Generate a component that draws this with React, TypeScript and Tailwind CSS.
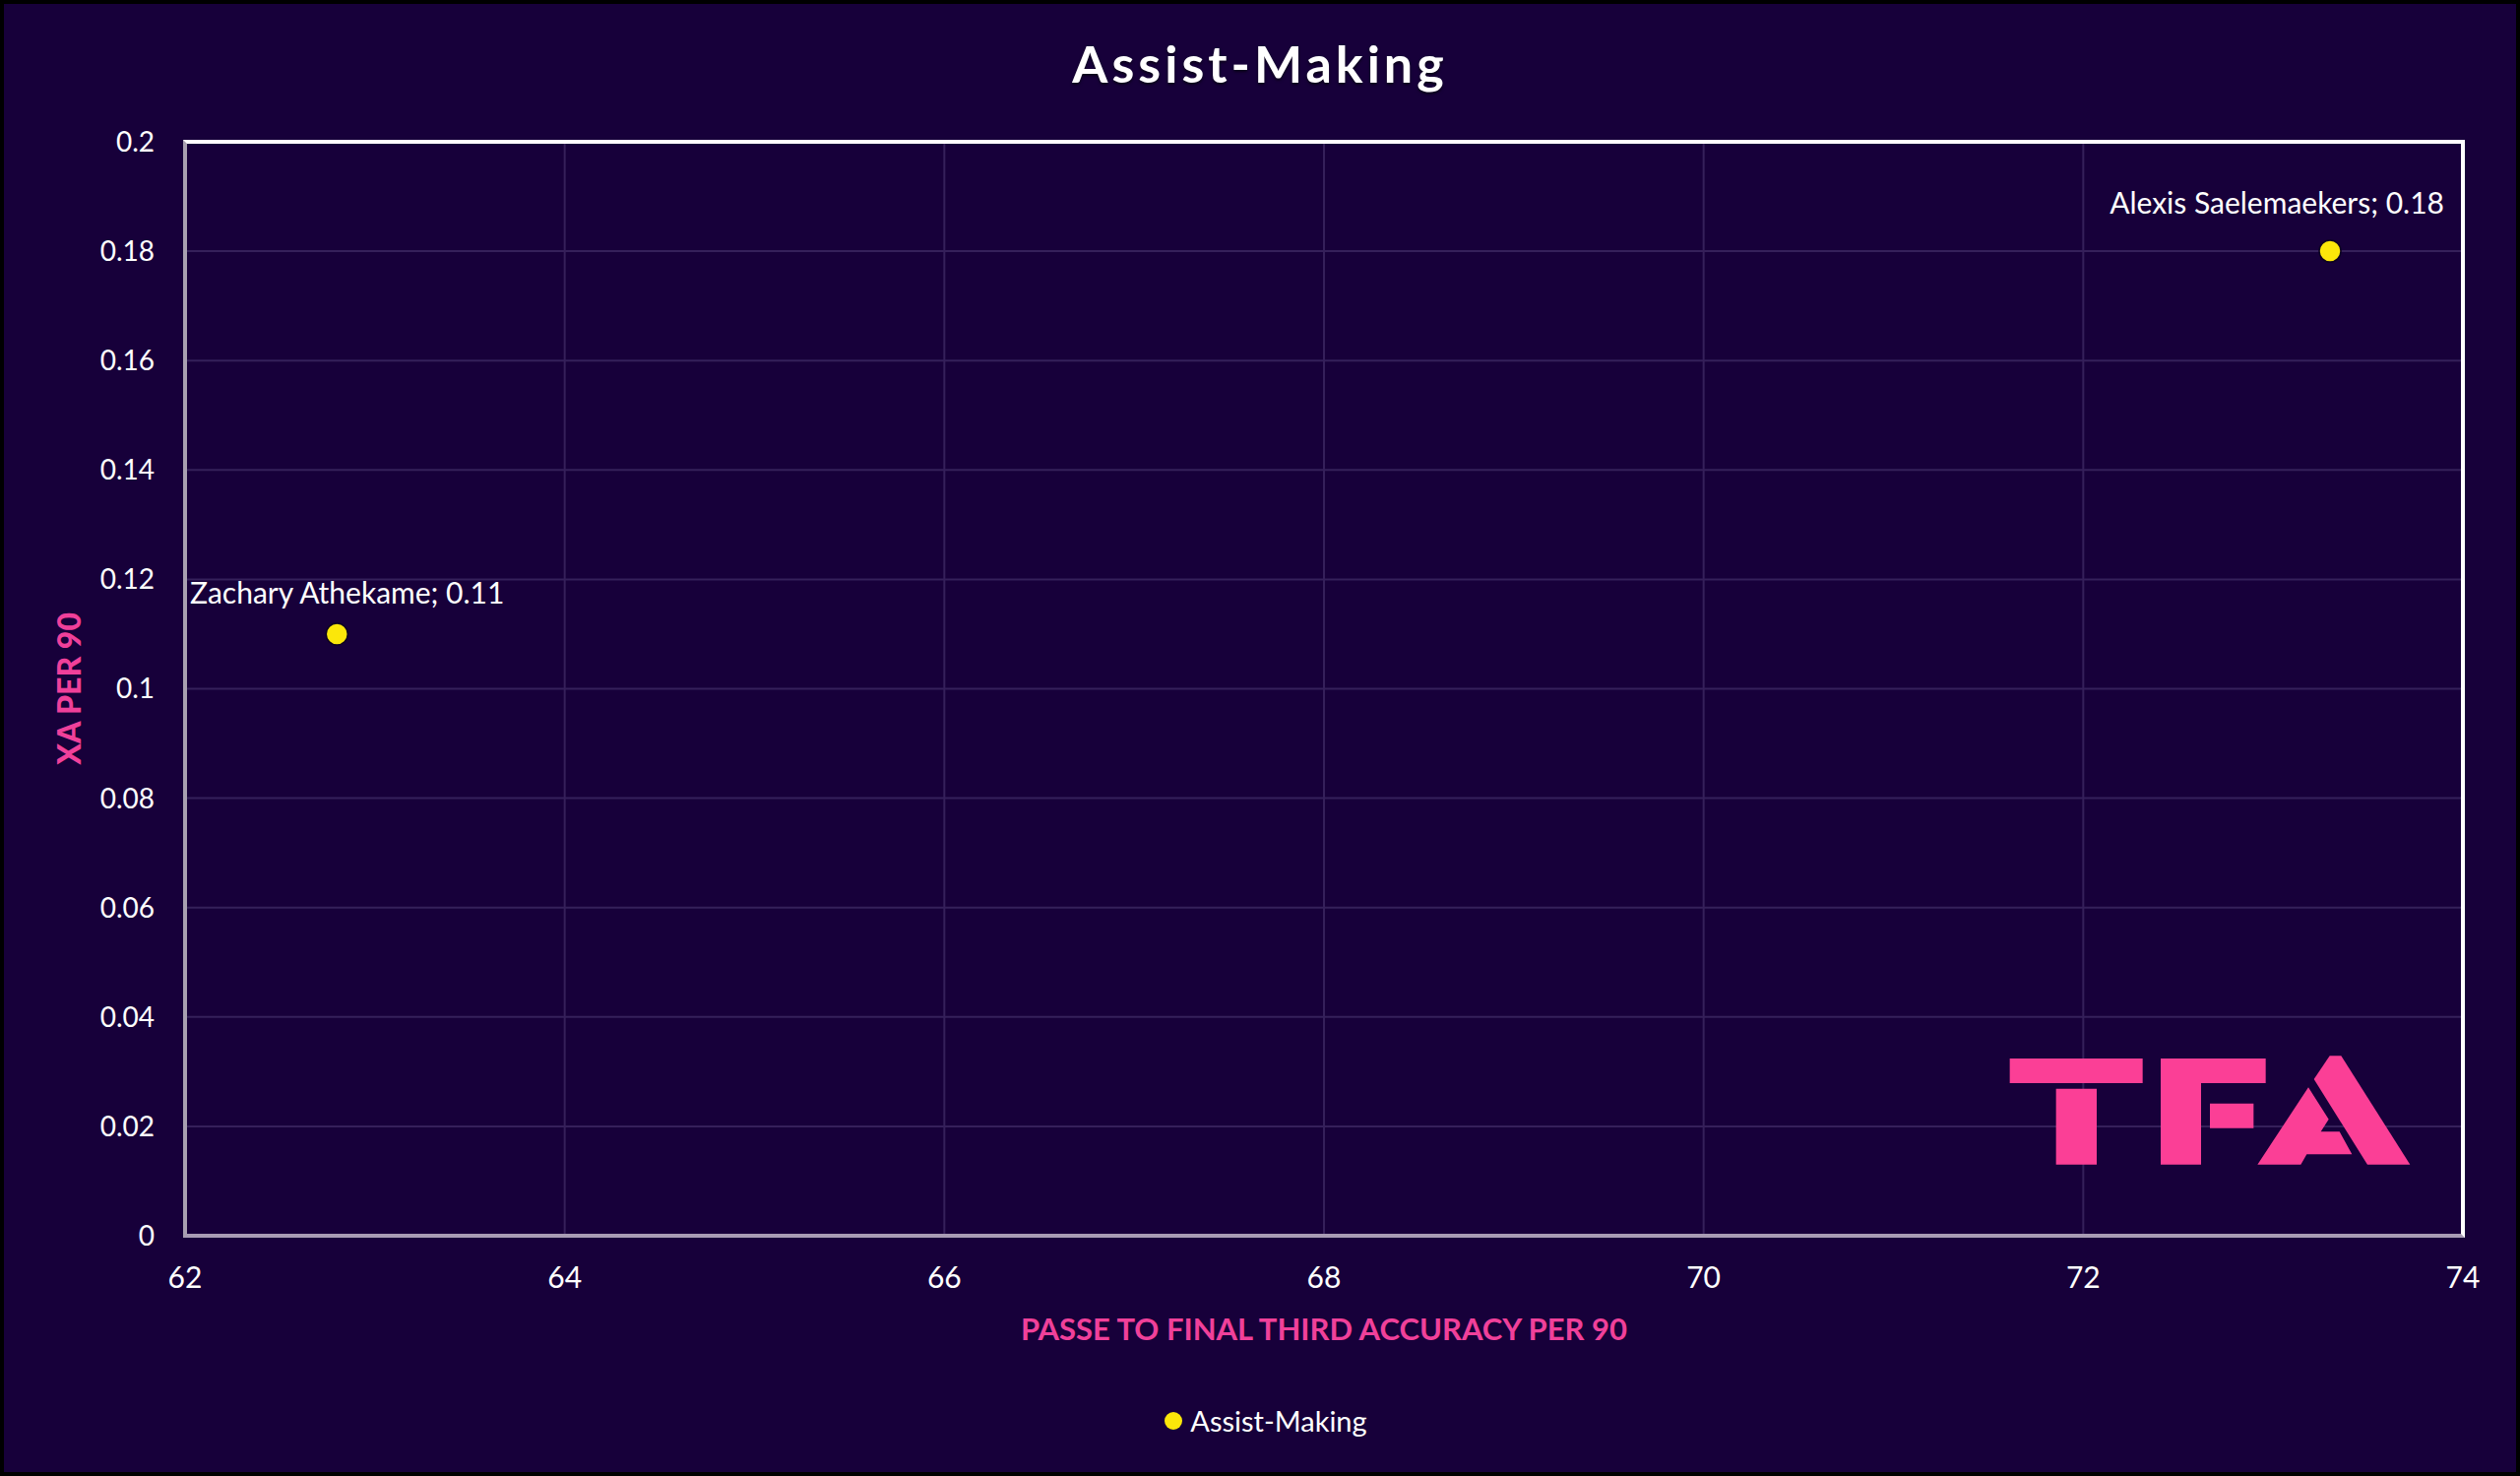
const yTicks = ['0.2', '0.18', '0.16', '0.14', '0.12', '0.1', '0.08', '0.06', '0.04', '0.02', '0'];
const xTicks = ['62', '64', '66', '68', '70', '72', '74'];

const points = [
  { x: 62.8, y: 0.11 },
  { x: 73.3, y: 0.18 },
];

// plot scale, in px inside the inner box of the frame
const sx = (v: number) => ((v - 62) / 12) * 2314 - 2;
const sy = (v: number) => ((0.2 - v) / 0.2) * 1111 - 2;

function Logo() {
  return (
    <svg viewBox="120 90 1230 345" className="absolute right-[50px] bottom-[68px] w-[410px] h-[115px]" fill="#fb3f96">
      <path d="M125 105H530V180H125Z" />
      <path d="M266 197H390V428H266Z" />
      <path d="M585 105H905V180H708V428H585Z" />
      <path d="M735 242H868V317H735Z" />
      <path d="M1100 97H1135L1345 428H1215L1052 168Z" />
      <path d="M1035 193L1097 290L1073 328H1130L1168 397H1030L1012 428H880Z" />
    </svg>
  );
}

export default function App() {
  return (
    <div className="w-[2560px] h-[1499px] flex flex-col border-4 border-black bg-[#17003a] text-white font-['Lato','Open_Sans',sans-serif] text-[30px] leading-[34px]">
      {/* Title */}
      <div className="h-[122px] flex items-center justify-center text-[52px] font-bold tracking-[4px] pb-[2px] [text-shadow:0_2px_3px_rgba(0,0,0,0.6)]">
        Assist-Making
      </div>
      <div className="h-[16px]" />

      {/* Y axis + plot */}
      <div className="flex h-[1115px]">
        <div className="ml-[37px] w-[58px] flex items-center justify-center">
          <span className="[writing-mode:vertical-rl] rotate-180 font-black text-[32px] text-[#f0409a] whitespace-nowrap">XA PER 90</span>
        </div>
        <div className="w-[58px] mt-[1px] mb-[3px] flex flex-col justify-between items-end text-[28px]">
          {yTicks.map((t) => (
            <div key={t} className="h-0 flex items-center whitespace-nowrap">{t}</div>
          ))}
        </div>
        <div className="ml-[29px] w-[2318px] relative border-4 border-t-white border-r-white border-l-[#a8a0b0] border-b-[#a89cb4]">
          <svg className="block w-full h-full" viewBox="0 0 2310 1107">
            {yTicks.slice(1, -1).map((_, i) => (
              <line key={i} x1="0" x2="2310" y1={sy(0.18 - i * 0.02)} y2={sy(0.18 - i * 0.02)} stroke="#35205a" strokeWidth="2" />
            ))}
            {xTicks.slice(1, -1).map((_, i) => (
              <line key={i} x1={sx(64 + i * 2)} x2={sx(64 + i * 2)} y1="0" y2="1107" stroke="#35205a" strokeWidth="2" />
            ))}
            {points.map((p) => (
              <circle key={p.x} cx={sx(p.x)} cy={sy(p.y)} r="11" fill="#fbe70a" stroke="#0d0020" strokeWidth="1.5" />
            ))}
          </svg>
          <div className="absolute right-[17px] top-[42px] whitespace-nowrap">Alexis Saelemaekers; 0.18</div>
          <div className="absolute left-[3px] top-[438px] whitespace-nowrap">Zachary Athekame; 0.11</div>
          <Logo />
        </div>
      </div>

      {/* X axis */}
      <div className="ml-[184px] w-[2314px] mt-[25px] h-[28px] flex justify-between items-center">
        {xTicks.map((t) => (
          <div key={t} className="w-0 flex justify-center">{t}</div>
        ))}
      </div>
      <div className="ml-[184px] w-[2314px] mt-[24px] h-[30px] flex items-center justify-center font-bold text-[31px] text-[#f0409a] whitespace-nowrap">
        PASSE TO FINAL THIRD ACCURACY PER 90
      </div>

      {/* Legend */}
      <div className="mt-[64px] h-[30px] flex items-center justify-center gap-[8px] pl-[12px] text-[29px]">
        <span className="w-[18px] h-[18px] rounded-full bg-[#fbe70a]" />
        <span>Assist-Making</span>
      </div>
    </div>
  );
}
